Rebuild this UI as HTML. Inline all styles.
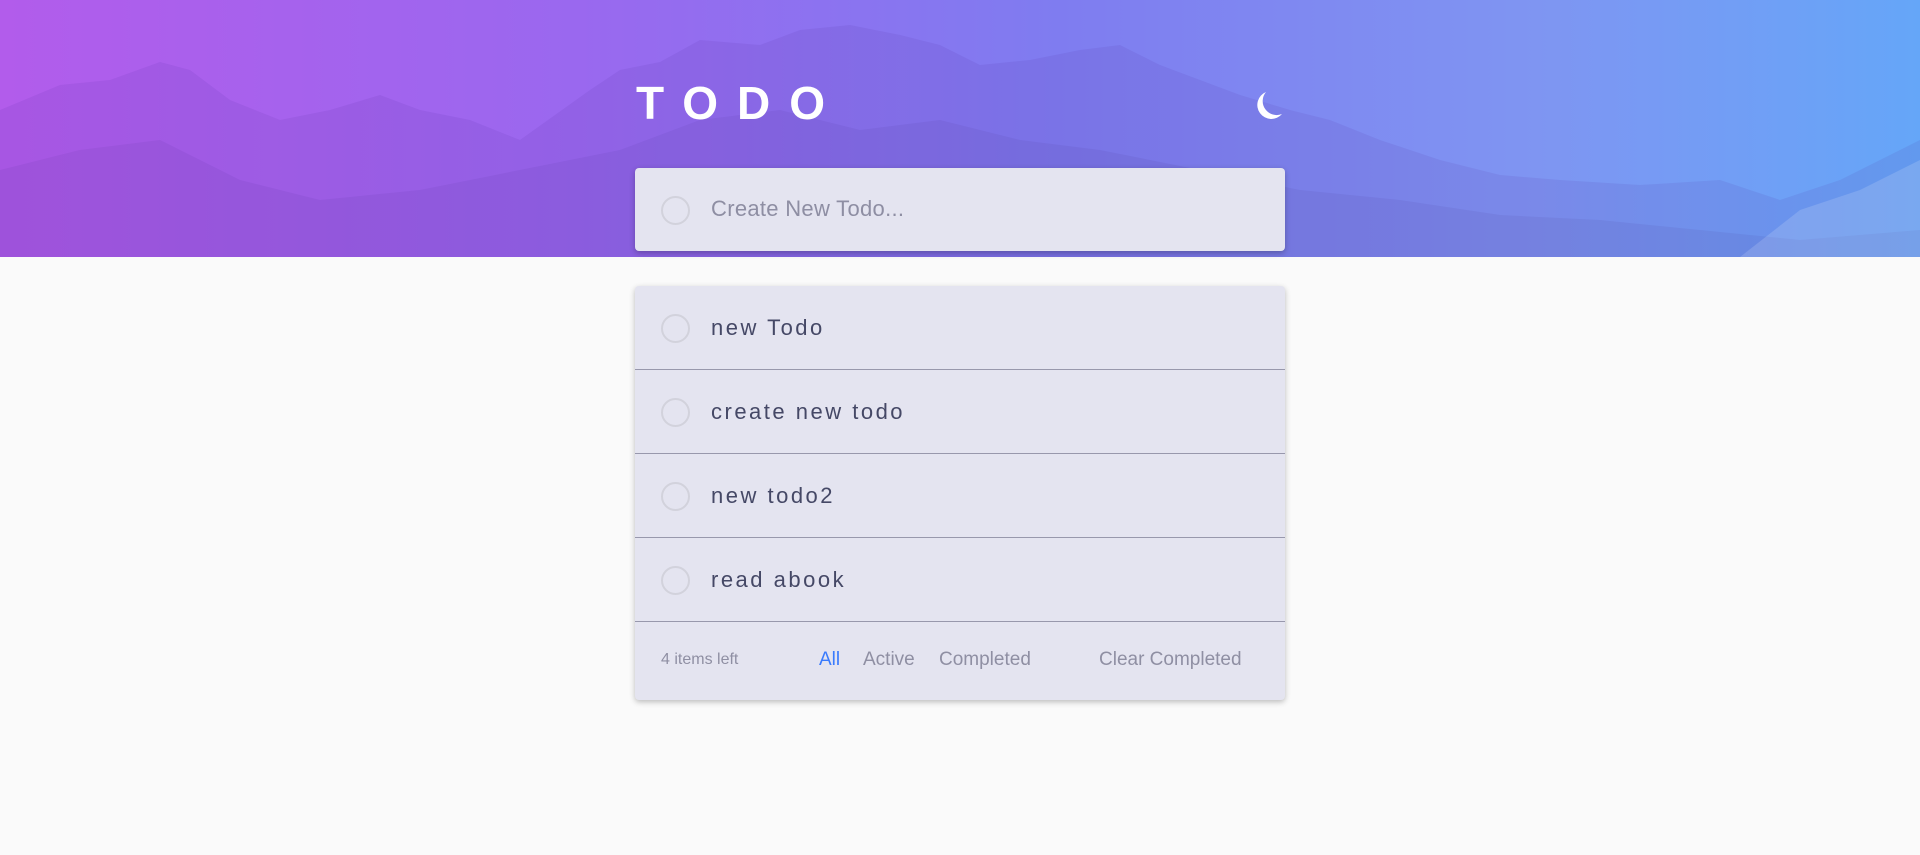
<!DOCTYPE html>
<html><head><meta charset="utf-8"><style>
*{margin:0;padding:0;box-sizing:border-box}
body{width:1920px;height:855px;background:#fafafa;font-family:"Liberation Sans",sans-serif;position:relative;overflow:hidden}
.hdr{position:absolute;left:0;top:0;width:1920px;height:257px;background:linear-gradient(90deg,#b25ceb 0%,#9a68ef 30%,#7f7cf0 55%,#7f95f2 80%,#65a6f8 100%);overflow:hidden}
.hdr svg{position:absolute;left:0;top:0}
.title{position:absolute;left:636px;top:78px;color:#fff;font-size:46px;font-weight:bold;letter-spacing:19px;line-height:50px}
.moon{position:absolute;left:1250px;top:88px}
.card{position:absolute;left:635px;width:650px;background:#e4e4f0;border-radius:4px;box-shadow:0 2px 6px rgba(0,0,0,.25)}
.row{height:84px;border-bottom:1px solid #9898ac;position:relative}
.c{position:absolute;width:29px;height:29px;border:2px solid #d2d2dc;border-radius:50%}
.row .c,.inp .c{left:26px;top:50%;margin-top:-14px}
.t{position:absolute;left:76px;top:0;line-height:84px;font-size:22px;color:#454866;letter-spacing:2.5px}
.inp .t{color:#8e8ea3;letter-spacing:0.3px;line-height:82px;font-size:22px}
.ft{height:78px;position:relative;font-size:19px;color:#8f8fa3}
.ft span{position:absolute;top:27px}
</style></head><body>
<div class="hdr">
<svg width="1920" height="257" viewBox="0 0 1920 257">
<polygon fill="#4a2a9a" opacity="0.1" points="0,110 60,85 110,80 160,62 190,70 230,100 280,120 330,110 380,95 420,110 470,120 520,140 590,90 620,70 660,62 700,40 760,45 800,30 850,25 900,35 940,45 980,65 1030,60 1080,50 1120,45 1160,65 1200,80 1240,95 1290,110 1330,120 1380,140 1440,160 1500,175 1560,180 1640,185 1720,180 1780,200 1840,180 1900,150 1920,140 1920,257 0,257"/>
<polygon fill="#3a2080" opacity="0.08" points="0,170 80,150 160,140 240,180 320,200 420,190 520,170 620,150 700,120 780,110 860,130 940,120 1020,140 1100,150 1200,170 1300,190 1400,200 1500,215 1600,220 1700,230 1800,240 1920,230 1920,257 0,257"/>
<polygon fill="#ffffff" opacity="0.15" points="1740,257 1800,210 1860,190 1920,160 1920,257"/>
</svg>
</div>
<div class="title">TODO</div>
<svg class="moon" width="36" height="36" viewBox="0 0 36 36"><path d="M16 4 A14 14 0 1 0 32 26 A14 14 0 0 1 16 4 Z" fill="#fff"/></svg>
<div class="card inp" style="top:168px;height:83px"><div class="c"></div><div class="t">Create New Todo...</div></div>
<div class="card" style="top:286px">
<div class="row"><div class="c"></div><div class="t">new Todo</div></div>
<div class="row"><div class="c"></div><div class="t">create new todo</div></div>
<div class="row"><div class="c"></div><div class="t">new todo2</div></div>
<div class="row"><div class="c"></div><div class="t">read abook</div></div>
<div class="ft">
<span style="left:26px;font-size:16px;top:29px">4 items left</span>
<span style="left:184px;color:#3a7bfd">All</span>
<span style="left:228px">Active</span>
<span style="left:304px">Completed</span>
<span style="left:464px">Clear Completed</span>
</div>
</div>
</body></html>
